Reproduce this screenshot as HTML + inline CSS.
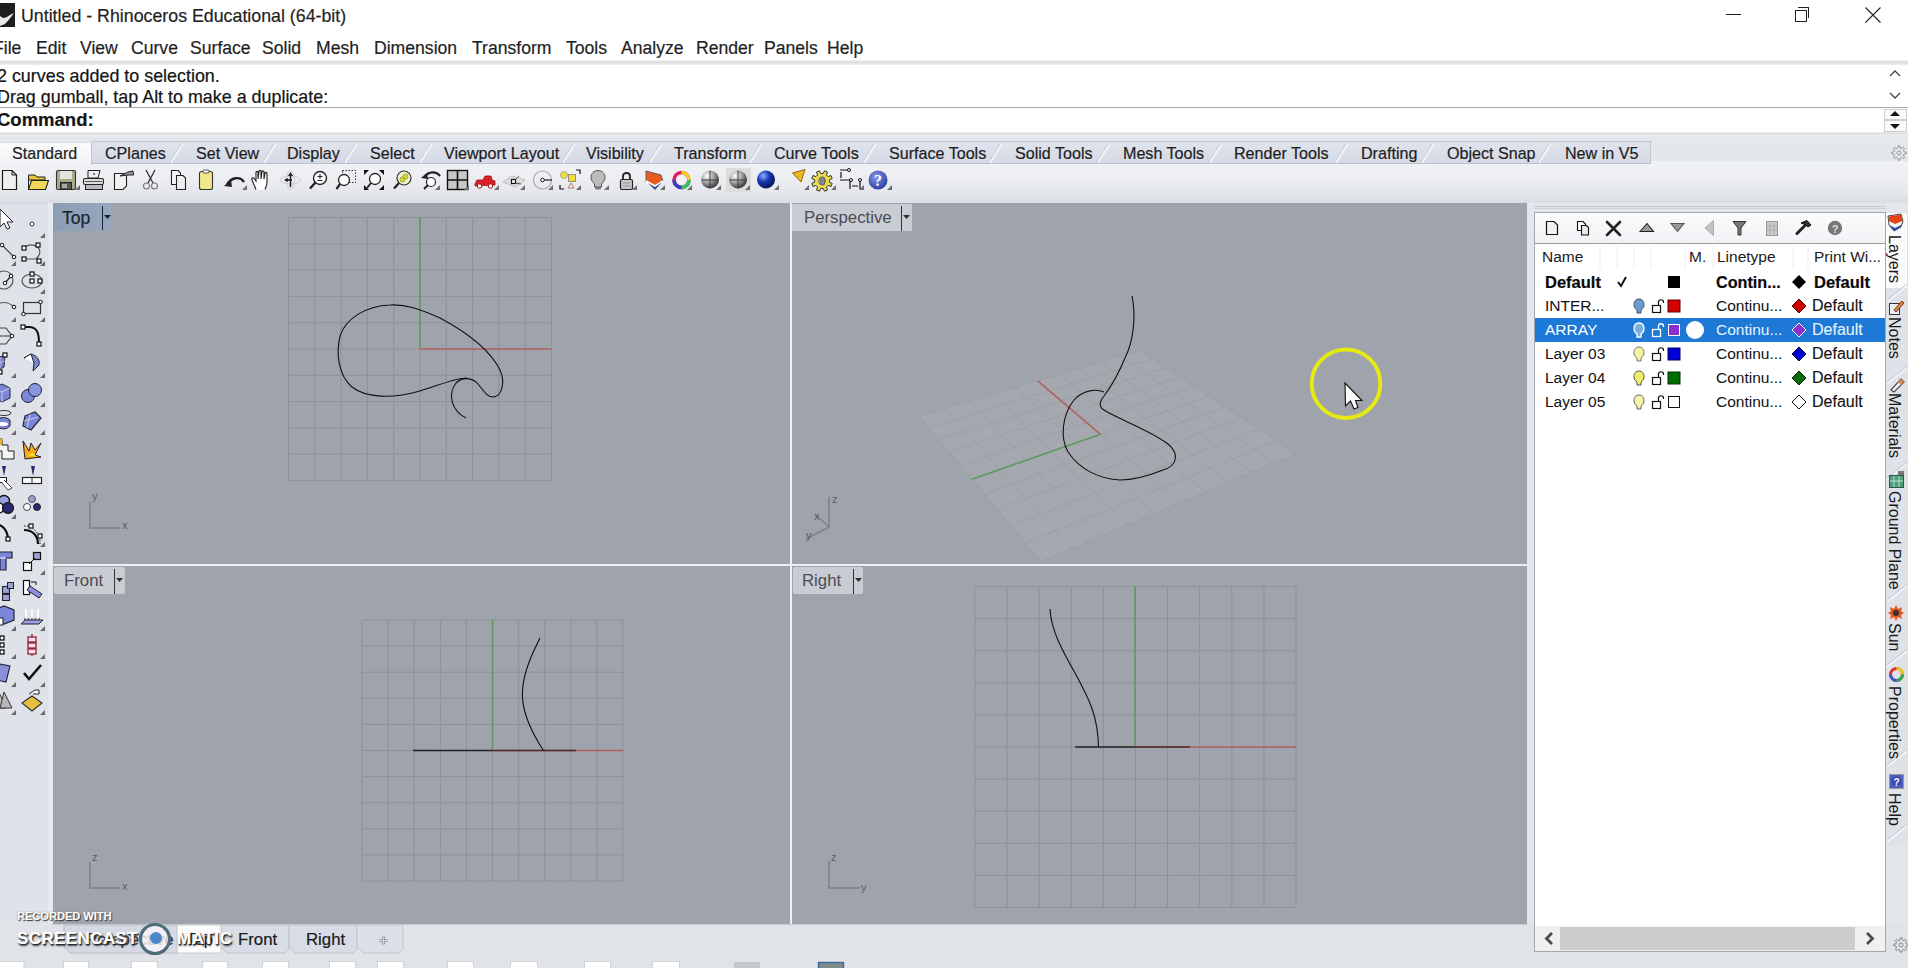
<!DOCTYPE html>
<html><head><meta charset="utf-8">
<style>
*{margin:0;padding:0;box-sizing:border-box}
html,body{width:1908px;height:968px;overflow:hidden;background:#e2e5ea;font-family:"Liberation Sans",sans-serif;color:#111}
.a{position:absolute;white-space:nowrap}
.a,.tab,.m{-webkit-text-stroke:0.2px currentColor}
.m{position:absolute;top:0}
.tab{position:absolute;top:142px;height:23px;font-size:16.1px;line-height:23px;color:#1e1e1e}
.vp{position:absolute;background:#9fa3ab;overflow:hidden}
.vl{position:absolute;left:0;top:0;height:28px;font-size:17.5px;line-height:28px;color:#3a3d42;padding-left:10px}
.vl i{position:absolute;top:3px;width:1px;height:22px;background:#555}
.vl b{position:absolute;top:12px;width:0;height:0;border-left:4px solid transparent;border-right:4px solid transparent;border-top:4px solid #222}
.ax{position:absolute;font-size:11px;color:#555}

</style></head><body>
<!-- title bar -->
<div class="a" style="left:0;top:0;width:1908px;height:61px;background:#fff"></div>

<svg class="a" style="left:0;top:3px" width="15" height="24"><rect x="0" y="0" width="15" height="24" fill="#1e1e1e"/><path d="M14,10 C11,14 8,18 5,21 L0,23 L0,13 L3,15 C6,15 8,13 10,12Z" fill="#e8e8e8"/></svg>
<div class="a" style="left:21px;top:4px;font-size:17.8px;line-height:24px;color:#1f1f1f">Untitled - Rhinoceros Educational (64-bit)</div>
<div class="a" style="left:1726px;top:14px;width:15px;height:1px;background:#222"></div>
<div class="a" style="left:1795px;top:10px;width:12px;height:12px;border:1px solid #222;background:#fff"></div>
<div class="a" style="left:1798px;top:7px;width:11px;height:11px;border-top:1px solid #222;border-right:1px solid #222"></div>
<div class="a" style="left:1795px;top:10px;width:12px;height:12px;border:1px solid #222"></div>
<svg class="a" style="left:1864px;top:6px" width="18" height="18"><path d="M1.5,1.5 L16.5,16.5 M16.5,1.5 L1.5,16.5" stroke="#222" stroke-width="1.1"/></svg>
<!-- menu -->
<div class="a" style="left:0;top:36px;width:900px;height:24px;font-size:17.6px;line-height:24px;color:#1f1f1f">
<span class="m" style="left:-7px">File</span><span class="m" style="left:36px">Edit</span><span class="m" style="left:80px">View</span><span class="m" style="left:131px">Curve</span><span class="m" style="left:190px">Surface</span><span class="m" style="left:262px">Solid</span><span class="m" style="left:316px">Mesh</span><span class="m" style="left:374px">Dimension</span><span class="m" style="left:472px">Transform</span><span class="m" style="left:566px">Tools</span><span class="m" style="left:621px">Analyze</span><span class="m" style="left:696px">Render</span><span class="m" style="left:764px">Panels</span><span class="m" style="left:827px">Help</span>
</div>
<div class="a" style="left:0;top:60px;width:1908px;height:5px;background:linear-gradient(#f3f3f3,#dcdcdc 50%,#f0f0f0)"></div>
<!-- command area -->
<div class="a" style="left:0;top:65px;width:1908px;height:67px;background:#fff"></div>
<div class="a" style="left:0;top:107px;width:1908px;height:1px;background:#a9a9a9"></div>
<div class="a" style="left:-3px;top:66px;font-size:17.9px;line-height:21px;color:#141414">2 curves added to selection.</div>
<div class="a" style="left:-3px;top:87px;font-size:17.9px;line-height:21px;color:#141414">Drag gumball, tap Alt to make a duplicate:</div>
<div class="a" style="left:-3px;top:109px;font-size:18.5px;line-height:21px;color:#141414;font-weight:bold">Command:</div>
<svg class="a" style="left:1884px;top:66px" width="24" height="68">
<path d="M6,10 L11,5 L16,10" fill="none" stroke="#444" stroke-width="1.3"/>
<path d="M6,27 L11,32 L16,27" fill="none" stroke="#444" stroke-width="1.3"/>
<rect x="0.5" y="43.5" width="22" height="10" fill="#fafafa" stroke="#cfcfcf"/>
<rect x="0.5" y="54.5" width="22" height="11" fill="#fafafa" stroke="#cfcfcf"/>
<path d="M6,50 L11,45 L16,50Z" fill="#111"/><path d="M6,58 L11,63 L16,58Z" fill="#111"/>
</svg>
<!-- toolbar band -->
<div class="a" style="left:0;top:132px;width:1908px;height:71px;background:linear-gradient(#e6e8ec 0px,#e6e8ec 1px,#d6d9de 2px,#eceef1 3px,#e4e7ec 6px,#e4e7ec 29px,#f0f2f5 30px,#eceef2 45px,#e2e5ea 64px,#dcdfe5 68px)"></div>
<!-- tabs -->
<div class="a" style="left:92px;top:141px;width:1559px;height:23px;background:linear-gradient(#dfe3ec,#d5dae6);border-top:1px solid #bfc4cd;border-bottom:1px solid #b9bec8;border-right:1px solid #c4c8d0"></div>
<div class="a" style="left:0;top:142px;width:92px;height:23px;background:linear-gradient(#fbfbfc,#f1f2f5);border-right:1px solid #c0c4cc;border-top:1px solid #d8dbe0"></div>
<svg class="a" style="left:0;top:141px" width="1660" height="24">
<g stroke="#f4f6f9" stroke-width="1.6" fill="none">
<path d="M171,22 L183,3"/><path d="M264,22 L276,3"/><path d="M345,22 L357,3"/><path d="M420,22 L432,3"/><path d="M563,22 L575,3"/><path d="M650,22 L662,3"/><path d="M750,22 L762,3"/><path d="M864,22 L876,3"/><path d="M990,22 L1002,3"/><path d="M1098,22 L1110,3"/><path d="M1210,22 L1222,3"/><path d="M1336,22 L1348,3"/><path d="M1422,22 L1434,3"/><path d="M1539,22 L1551,3"/>
</g>
<g stroke="#ccd0d9" stroke-width="1" fill="none">
<path d="M169,22 L181,3"/><path d="M262,22 L274,3"/><path d="M343,22 L355,3"/><path d="M418,22 L430,3"/><path d="M561,22 L573,3"/><path d="M648,22 L660,3"/><path d="M748,22 L760,3"/><path d="M862,22 L874,3"/><path d="M988,22 L1000,3"/><path d="M1096,22 L1108,3"/><path d="M1208,22 L1220,3"/><path d="M1334,22 L1346,3"/><path d="M1420,22 L1432,3"/><path d="M1537,22 L1549,3"/>
</g>
</svg>
<div class="tab" style="left:12px">Standard</div>
<div class="tab" style="left:105px">CPlanes</div>
<div class="tab" style="left:196px">Set View</div>
<div class="tab" style="left:287px">Display</div>
<div class="tab" style="left:370px">Select</div>
<div class="tab" style="left:444px">Viewport Layout</div>
<div class="tab" style="left:586px">Visibility</div>
<div class="tab" style="left:674px">Transform</div>
<div class="tab" style="left:774px">Curve Tools</div>
<div class="tab" style="left:889px">Surface Tools</div>
<div class="tab" style="left:1015px">Solid Tools</div>
<div class="tab" style="left:1123px">Mesh Tools</div>
<div class="tab" style="left:1234px">Render Tools</div>
<div class="tab" style="left:1361px">Drafting</div>
<div class="tab" style="left:1447px">Object Snap</div>
<div class="tab" style="left:1565px">New in V5</div>
<svg class="a" style="left:1891px;top:145px" width="16" height="16"><path d="M13.1,6.9 L15.1,7.0 L15.1,9.0 L13.1,9.1 L12.4,10.8 L13.7,12.3 L12.3,13.7 L10.8,12.4 L9.1,13.1 L9.0,15.1 L7.0,15.1 L6.9,13.1 L5.2,12.4 L3.7,13.7 L2.3,12.3 L3.6,10.8 L2.9,9.1 L0.9,9.0 L0.9,7.0 L2.9,6.9 L3.6,5.2 L2.3,3.7 L3.7,2.3 L5.2,3.6 L6.9,2.9 L7.0,0.9 L9.0,0.9 L9.1,2.9 L10.8,3.6 L12.3,2.3 L13.7,3.7 L12.4,5.2Z" fill="none" stroke="#9a9a9a" stroke-width="1"/><circle cx="8" cy="8" r="2" fill="none" stroke="#9a9a9a" stroke-width="1"/></svg>
<!-- left toolbar -->
<div class="a" style="left:0;top:203px;width:48px;height:721px;background:#dfe2e8;border-top:1px solid #d2d5db"></div>
<div class="a" style="left:48px;top:203px;width:5px;height:721px;background:#e7eaef"></div>
<!-- viewports -->
<div class="vp" style="left:53px;top:203px;width:737px;height:361px"></div>
<div class="vp" style="left:792px;top:203px;width:735px;height:361px"></div>
<div class="vp" style="left:53px;top:566px;width:737px;height:358px"></div>
<div class="vp" style="left:792px;top:566px;width:735px;height:358px"></div>
<div class="a" style="left:790px;top:203px;width:2px;height:721px;background:#eceef2"></div>
<div class="a" style="left:53px;top:564px;width:1474px;height:2px;background:#eceef2"></div>
<!-- right panel outer -->
<div class="a" style="left:1527px;top:203px;width:381px;height:721px;background:#e3e6eb"></div>
<!-- bottom area -->
<div class="a" style="left:0;top:924px;width:1533px;height:44px;background:#e0e3e8"></div>
<div class="a" style="left:1527px;top:924px;width:381px;height:44px;background:#e0e3e8"></div>

<svg class="a" style="left:0;top:0" width="1908" height="968" viewBox="0 0 1908 968">
<defs>
<clipPath id="cTop"><rect x="53" y="203" width="737" height="361"/></clipPath>
<clipPath id="cPer"><rect x="792" y="203" width="735" height="361"/></clipPath>
<clipPath id="cFr"><rect x="53" y="566" width="737" height="358"/></clipPath>
<clipPath id="cRt"><rect x="792" y="566" width="735" height="358"/></clipPath>
</defs>
<g clip-path="url(#cTop)"><g stroke="#8d9199" stroke-width="1"><line x1="288.5" y1="217.5" x2="288.5" y2="480.5"/><line x1="288.5" y1="217.5" x2="551.5" y2="217.5"/><line x1="314.8" y1="217.5" x2="314.8" y2="480.5"/><line x1="288.5" y1="243.8" x2="551.5" y2="243.8"/><line x1="341.1" y1="217.5" x2="341.1" y2="480.5"/><line x1="288.5" y1="270.1" x2="551.5" y2="270.1"/><line x1="367.4" y1="217.5" x2="367.4" y2="480.5"/><line x1="288.5" y1="296.4" x2="551.5" y2="296.4"/><line x1="393.7" y1="217.5" x2="393.7" y2="480.5"/><line x1="288.5" y1="322.7" x2="551.5" y2="322.7"/><line x1="420.0" y1="217.5" x2="420.0" y2="480.5"/><line x1="288.5" y1="349.0" x2="551.5" y2="349.0"/><line x1="446.3" y1="217.5" x2="446.3" y2="480.5"/><line x1="288.5" y1="375.3" x2="551.5" y2="375.3"/><line x1="472.6" y1="217.5" x2="472.6" y2="480.5"/><line x1="288.5" y1="401.6" x2="551.5" y2="401.6"/><line x1="498.9" y1="217.5" x2="498.9" y2="480.5"/><line x1="288.5" y1="427.9" x2="551.5" y2="427.9"/><line x1="525.2" y1="217.5" x2="525.2" y2="480.5"/><line x1="288.5" y1="454.2" x2="551.5" y2="454.2"/><line x1="551.5" y1="217.5" x2="551.5" y2="480.5"/><line x1="288.5" y1="480.5" x2="551.5" y2="480.5"/></g><line x1="420" y1="217.5" x2="420" y2="349" stroke="#5f9a5f" stroke-width="1.6"/><line x1="420" y1="349" x2="551.5" y2="349" stroke="#b0615f" stroke-width="1.6"/><path d="M466,418 C452,411 447,395 456,383 C462,377 472,377 478,384 C484,391 487,397 493,397 C503,396 505,381 500,370 C491,352 470,334 440,318 C420,309 405,304 390,305 C366,306 346,318 340,336 C336,353 338,375 352,387 C366,398 392,399 420,391 C440,385 455,378 467,378" fill="none" stroke="#111" stroke-width="1.1"/></g>
<g clip-path="url(#cPer)"><polygon points="919.5,416.3 1139.7,350.4 1295.4,453.8 1040.8,561.6" fill="#a5a8af"/><g stroke="#9b9fa6" stroke-width="1"><line x1="1295.4" y1="453.8" x2="1040.8" y2="561.6"/><line x1="1295.4" y1="453.8" x2="1139.7" y2="350.4"/><line x1="1276.4" y1="441.2" x2="1025.4" y2="543.2"/><line x1="1274.0" y1="462.9" x2="1120.5" y2="356.2"/><line x1="1258.3" y1="429.1" x2="1011.0" y2="525.9"/><line x1="1251.8" y1="472.3" x2="1100.7" y2="362.1"/><line x1="1241.0" y1="417.7" x2="997.3" y2="509.5"/><line x1="1228.8" y1="482.0" x2="1080.3" y2="368.2"/><line x1="1224.6" y1="406.8" x2="984.4" y2="494.0"/><line x1="1205.0" y1="492.1" x2="1059.4" y2="374.4"/><line x1="1208.8" y1="396.3" x2="972.1" y2="479.3"/><line x1="1180.2" y1="502.6" x2="1037.8" y2="380.9"/><line x1="1193.8" y1="386.3" x2="960.5" y2="465.4"/><line x1="1154.5" y1="513.5" x2="1015.6" y2="387.5"/><line x1="1179.4" y1="376.8" x2="949.5" y2="452.2"/><line x1="1127.8" y1="524.8" x2="992.7" y2="394.4"/><line x1="1165.6" y1="367.6" x2="939.0" y2="439.7"/><line x1="1100.0" y1="536.6" x2="969.0" y2="401.5"/><line x1="1152.4" y1="358.8" x2="929.0" y2="427.7"/><line x1="1071.0" y1="548.8" x2="944.7" y2="408.8"/><line x1="1139.7" y1="350.4" x2="919.5" y2="416.3"/><line x1="1040.8" y1="561.6" x2="919.5" y2="416.3"/></g><line x1="1100.4" y1="434.3" x2="1037.8" y2="380.9" stroke="#b0615f" stroke-width="1.6"/><line x1="1100.4" y1="434.3" x2="972.1" y2="479.3" stroke="#5f9a5f" stroke-width="1.6"/><path d="M1132,296 C1136,315 1134,340 1125,358 C1118,375 1110,388 1104,396 C1099,402 1099,407 1104,410 C1120,420 1150,430 1168,444 C1180,454 1177,466 1163,470 C1148,476 1135,480 1120,480 C1100,479 1080,470 1068,452 C1060,438 1062,415 1074,400 C1082,391 1095,388 1104,392" fill="none" stroke="#111" stroke-width="1.1"/></g>
<g clip-path="url(#cFr)"><g stroke="#8d9199" stroke-width="1"><line x1="362.0" y1="620" x2="362.0" y2="881.0"/><line x1="362" y1="620.0" x2="623.0" y2="620.0"/><line x1="388.1" y1="620" x2="388.1" y2="881.0"/><line x1="362" y1="646.1" x2="623.0" y2="646.1"/><line x1="414.2" y1="620" x2="414.2" y2="881.0"/><line x1="362" y1="672.2" x2="623.0" y2="672.2"/><line x1="440.3" y1="620" x2="440.3" y2="881.0"/><line x1="362" y1="698.3" x2="623.0" y2="698.3"/><line x1="466.4" y1="620" x2="466.4" y2="881.0"/><line x1="362" y1="724.4" x2="623.0" y2="724.4"/><line x1="492.5" y1="620" x2="492.5" y2="881.0"/><line x1="362" y1="750.5" x2="623.0" y2="750.5"/><line x1="518.6" y1="620" x2="518.6" y2="881.0"/><line x1="362" y1="776.6" x2="623.0" y2="776.6"/><line x1="544.7" y1="620" x2="544.7" y2="881.0"/><line x1="362" y1="802.7" x2="623.0" y2="802.7"/><line x1="570.8" y1="620" x2="570.8" y2="881.0"/><line x1="362" y1="828.8" x2="623.0" y2="828.8"/><line x1="596.9" y1="620" x2="596.9" y2="881.0"/><line x1="362" y1="854.9" x2="623.0" y2="854.9"/><line x1="623.0" y1="620" x2="623.0" y2="881.0"/><line x1="362" y1="881.0" x2="623.0" y2="881.0"/></g><line x1="492.5" y1="620" x2="492.5" y2="750.5" stroke="#5f9a5f" stroke-width="1.6"/><line x1="492.5" y1="750.5" x2="623" y2="750.5" stroke="#b0615f" stroke-width="1.6"/><line x1="413" y1="750.5" x2="492.5" y2="750.5" stroke="#222" stroke-width="1.4"/><line x1="492.5" y1="750.5" x2="576" y2="750.5" stroke="#4a2c2c" stroke-width="1.5"/><path d="M540,638 C533,652 524,670 522.5,690 C521,710 530,730 543.5,750.5" fill="none" stroke="#111" stroke-width="1.1"/></g>
<g clip-path="url(#cRt)"><g stroke="#8d9199" stroke-width="1"><line x1="975.0" y1="586.5" x2="975.0" y2="907.5"/><line x1="975" y1="586.5" x2="1296.0" y2="586.5"/><line x1="1007.1" y1="586.5" x2="1007.1" y2="907.5"/><line x1="975" y1="618.6" x2="1296.0" y2="618.6"/><line x1="1039.2" y1="586.5" x2="1039.2" y2="907.5"/><line x1="975" y1="650.7" x2="1296.0" y2="650.7"/><line x1="1071.3" y1="586.5" x2="1071.3" y2="907.5"/><line x1="975" y1="682.8" x2="1296.0" y2="682.8"/><line x1="1103.4" y1="586.5" x2="1103.4" y2="907.5"/><line x1="975" y1="714.9" x2="1296.0" y2="714.9"/><line x1="1135.5" y1="586.5" x2="1135.5" y2="907.5"/><line x1="975" y1="747.0" x2="1296.0" y2="747.0"/><line x1="1167.6" y1="586.5" x2="1167.6" y2="907.5"/><line x1="975" y1="779.1" x2="1296.0" y2="779.1"/><line x1="1199.7" y1="586.5" x2="1199.7" y2="907.5"/><line x1="975" y1="811.2" x2="1296.0" y2="811.2"/><line x1="1231.8" y1="586.5" x2="1231.8" y2="907.5"/><line x1="975" y1="843.3" x2="1296.0" y2="843.3"/><line x1="1263.9" y1="586.5" x2="1263.9" y2="907.5"/><line x1="975" y1="875.4" x2="1296.0" y2="875.4"/><line x1="1296.0" y1="586.5" x2="1296.0" y2="907.5"/><line x1="975" y1="907.5" x2="1296.0" y2="907.5"/></g><line x1="1135" y1="586.5" x2="1135" y2="747" stroke="#5f9a5f" stroke-width="1.6"/><line x1="1135" y1="747" x2="1296" y2="747" stroke="#b0615f" stroke-width="1.6"/><line x1="1075" y1="747" x2="1135" y2="747" stroke="#222" stroke-width="1.4"/><line x1="1135" y1="747" x2="1190" y2="747" stroke="#4a2c2c" stroke-width="1.5"/><path d="M1050,609 C1051,630 1062,650 1075,673 C1088,697 1098,715 1098.5,747" fill="none" stroke="#111" stroke-width="1.1"/></g>
<g transform="translate(2,170)"><path d="M0.5,0.5 L10,0.5 L14.5,5 L14.5,19.5 L0.5,19.5Z" fill="#f0f0f0" stroke="#1a1a1a" stroke-width="1.2"/><path d="M10,0.5 L10,5 L14.5,5" fill="none" stroke="#1a1a1a"/></g>
<g transform="translate(28,171)"><path d="M0.5,4 L7,4 L9,6 L17,6 L17,9 L0.5,9Z" fill="#e8c23a" stroke="#222" stroke-width="1"/><path d="M0.5,18.5 L3.5,9.5 L20.5,9.5 L17.5,18.5Z" fill="#f2d85a" stroke="#222" stroke-width="1.1"/><path d="M0.5,9 L0.5,18.5" stroke="#222"/></g>
<g transform="translate(56,170)"><rect x="0.5" y="0.5" width="19" height="19" rx="1.5" fill="#a8ab88" stroke="#333" stroke-width="1.1"/><rect x="4" y="1" width="12" height="8" fill="#e3e3e3"/><rect x="4.5" y="12.5" width="11" height="7" fill="#555" stroke="#222"/><rect x="6" y="14" width="5" height="4" fill="#aaa"/></g><path d="M75,190 L80,185 L80,190Z" fill="#6e6e6e"/>
<g transform="translate(83,170)"><path d="M5,0.5 L17,0.5 L15,8 L5,8Z" fill="#eee" stroke="#222"/><rect x="0.5" y="8.5" width="20" height="6" rx="1.5" fill="#ddd" stroke="#222" stroke-width="1.1"/><rect x="2.5" y="14.5" width="17" height="5" fill="#bbb" stroke="#222"/><path d="M2,11.5 H19" stroke="#555"/><circle cx="11" cy="4" r="1" fill="#555"/></g>
<g transform="translate(114,170)"><path d="M0.5,3.5 L12.5,3.5 L12.5,16 L9,19.5 L0.5,19.5Z" fill="#f2f2f2" stroke="#222" stroke-width="1.1"/><path d="M6,6 L14,2 L19,1 L19.5,5 L14,5Z" fill="#999" stroke="#222"/></g>
<g transform="translate(143,170)"><path d="M3,0 L10,13 M12,0 L5,13" stroke="#333" stroke-width="1.3"/><circle cx="3.5" cy="16" r="3" fill="none" stroke="#777" stroke-width="1.1"/><circle cx="11.5" cy="16" r="3" fill="none" stroke="#777" stroke-width="1.1"/></g>
<g transform="translate(171,170)"><path d="M0.5,0.5 L7,0.5 L9.5,3 L9.5,14.5 L0.5,14.5Z" fill="#f4f4f4" stroke="#222" stroke-width="1.1"/><path d="M5.5,5.5 L12,5.5 L14.5,8 L14.5,19.5 L5.5,19.5Z" fill="#eee" stroke="#222" stroke-width="1.1"/></g>
<g transform="translate(199,170)"><rect x="0.5" y="1.5" width="13" height="18" rx="2" fill="#f0e888" stroke="#333" stroke-width="1.1"/><rect x="4" y="0" width="6" height="3" rx="1" fill="#f8f8f8" stroke="#333" stroke-width="0.8"/></g>
<g transform="translate(224,172)"><path d="M3,13 C7,5 16,4 20,10" fill="none" stroke="#222" stroke-width="2.4"/><path d="M0,14 L7,8 L8,15Z" fill="#222"/></g><path d="M242,190 L247,185 L247,190Z" fill="#6e6e6e"/>
<g transform="translate(251,170)"><path d="M5,19.5 L1,10 C0,8 2,7 3.5,9 L5,11 L5,2.5 C5,1 7,1 7,2.5 L7,9 L8,1.5 C8,0 10,0 10,1.5 L10,9 L11,2 C11,0.5 13,0.5 13,2 L13,9 L14,3.5 C14,2 16,2 16,3.5 L16,12 C16,15 15,17 14,19.5" fill="#fff" stroke="#222" stroke-width="1.1"/></g>
<g transform="translate(280,170)"><ellipse cx="10.5" cy="10" rx="10" ry="4" fill="none" stroke="#ccc" stroke-width="1"/><ellipse cx="10.5" cy="10" rx="4" ry="9.5" fill="none" stroke="#ccc" stroke-width="1"/><path d="M10.5,3 V17 M5,10 H12" stroke="#222" stroke-width="1.5"/><path d="M10.5,2 L8,6 L13,6Z M4,10 L8,8 L8,12Z" fill="#222"/></g>
<g transform="translate(309,170)"><circle cx="11" cy="8" r="6.5" fill="#fff" stroke="#222" stroke-width="1.4"/><path d="M11,4 V9 M8.5,6.5 H13.5 M8.5,10.5 H13.5" stroke="#222" stroke-width="1.1"/><path d="M6.5,12.5 L1,18.5" stroke="#222" stroke-width="2.4"/></g>
<g transform="translate(336,170)"><rect x="6.5" y="0.5" width="13" height="12" fill="none" stroke="#333" stroke-dasharray="1.5 1.5"/><circle cx="8" cy="10" r="5.5" fill="#fff" stroke="#222" stroke-width="1.3"/><path d="M4,14 L0.5,19" stroke="#222" stroke-width="2.2"/></g>
<g transform="translate(364,170)"><path d="M0,0 H5 L0,5Z M20,0 H15 L20,5Z M0,20 H5 L0,15Z M20,20 H15 L20,15Z" fill="#111"/><circle cx="11" cy="9" r="5.5" fill="#fff" stroke="#222" stroke-width="1.3"/><path d="M7,13 L3,18" stroke="#222" stroke-width="2"/></g>
<g transform="translate(393,170)"><circle cx="11" cy="8" r="7" fill="#f4f4d0" stroke="#333" stroke-width="1.2"/><circle cx="9.5" cy="9.5" r="2.6" fill="#d8d820" stroke="#777" stroke-width="0.6"/><circle cx="12.5" cy="6.5" r="2.6" fill="#d8d820" stroke="#777" stroke-width="0.6"/><path d="M6,13 L1,18.5" stroke="#222" stroke-width="2.2"/></g>
<g transform="translate(421,170)"><path d="M3,7 C8,1 15,1 19,6" fill="none" stroke="#222" stroke-width="2.2"/><path d="M0,8 L6,3 L7,9Z" fill="#222"/><circle cx="10" cy="12" r="4.5" fill="#fff" stroke="#222" stroke-width="1.2"/><path d="M7,15 L3,19" stroke="#222" stroke-width="2"/></g><path d="M435,190 L440,185 L440,190Z" fill="#6e6e6e"/>
<g transform="translate(447,170)"><rect x="0.5" y="0.5" width="20" height="19" fill="#c8c8c8" stroke="#111" stroke-width="1.4"/><path d="M10.5,0 V20 M0,10 H21" stroke="#111" stroke-width="1.6"/></g><path d="M464,190 L469,185 L469,190Z" fill="#6e6e6e"/>
<g transform="translate(475,172)"><path d="M0,12 L2,8 L8,8 L10,4 L16,4 L17,8 L20,9 L20,13 L0,14Z" fill="#d8202a" stroke="#a01010" stroke-width="0.8"/><circle cx="4.5" cy="14" r="2.2" fill="#fff" stroke="#a01010"/><circle cx="15.5" cy="14" r="2.2" fill="#fff" stroke="#a01010"/></g><path d="M494,190 L499,185 L499,190Z" fill="#6e6e6e"/>
<g transform="translate(503,170)"><path d="M0,12 L9,6 L22,10 L13,17Z" fill="#e0e0e0" stroke="#bbb"/><path d="M5,9 L17,13 M11,7 L8,15" stroke="#c8c8c8"/><rect x="8.5" y="9.5" width="4" height="4" fill="#fff" stroke="#111" stroke-width="1.2"/><path d="M12,10 L16,6 M12,13 L18,14" stroke="#333" stroke-width="0.8"/></g><path d="M520,190 L525,185 L525,190Z" fill="#6e6e6e"/>
<g transform="translate(533,170)"><circle cx="9.5" cy="10" r="9" fill="none" stroke="#aaa" stroke-width="1.2"/><circle cx="9.5" cy="10" r="1.8" fill="#fff" stroke="#222"/><path d="M11,10 H19" stroke="#222" stroke-width="1.2"/></g><path d="M548,190 L553,185 L553,190Z" fill="#6e6e6e"/>
<g transform="translate(559,169)"><circle cx="5" cy="6" r="3.5" fill="#f2e03a" stroke="#999" stroke-width="0.8"/><rect x="9.5" y="5.5" width="7" height="7" fill="#f2e03a" stroke="#888" stroke-width="0.9"/><path d="M9,19 L12,14 L15,19Z" fill="none" stroke="#c08060"/><path d="M17,1 H21 V5 M1,16 V20 H5" fill="none" stroke="#111" stroke-width="1.2"/></g><path d="M576,190 L581,185 L581,190Z" fill="#6e6e6e"/>
<g transform="translate(591,170)"><path d="M7,0.5 C11,0.5 14,3.5 14,7.5 C14,11 11.5,12.5 10.5,14 L10.5,17 L3.5,17 L3.5,14 C2.5,12.5 0,11 0,7.5 C0,3.5 3,0.5 7,0.5Z" fill="#bbbbbb" stroke="#555" stroke-width="1"/><rect x="4" y="17" width="6" height="2.5" rx="1" fill="#777"/></g><path d="M604,190 L609,185 L609,190Z" fill="#6e6e6e"/>
<g transform="translate(620,171)"><path d="M3,9 V5 C3,1 10,1 10,5 V9" fill="none" stroke="#222" stroke-width="1.8"/><rect x="0.5" y="8.5" width="12" height="10" rx="1.5" fill="#c8c8c8" stroke="#222" stroke-width="1.2"/><path d="M3,12 H10 M3,15 H10" stroke="#999"/></g><path d="M632,190 L637,185 L637,190Z" fill="#6e6e6e"/>
<g transform="translate(645,170)"><path d="M1,1 L16,5 L18,11 L10,18 L1,12Z" fill="#e85a20" stroke="#555" stroke-width="0.9"/><path d="M1,10 L10,15 L18,10 L18,12 L10,19 L1,13Z" fill="#ffffff"/><path d="M3,13 L10,17 L17,12 L10,20Z" fill="#3050a0"/></g><path d="M660,190 L665,185 L665,190Z" fill="#6e6e6e"/>
<g transform="translate(672,170)"><circle cx="9.5" cy="10" r="7.5" fill="none" stroke="#e02060" stroke-width="3.5"/><path d="M9.5,2.5 A7.5,7.5 0 0 1 17,10" fill="none" stroke="#f0d020" stroke-width="3.5"/><path d="M17,10 A7.5,7.5 0 0 1 9.5,17.5" fill="none" stroke="#30c060" stroke-width="3.5"/><path d="M9.5,17.5 A7.5,7.5 0 0 1 2,10" fill="none" stroke="#3040c0" stroke-width="3.5"/><circle cx="9.5" cy="10" r="4" fill="#f4f0f8"/></g><path d="M687,190 L692,185 L692,190Z" fill="#6e6e6e"/>
<defs><radialGradient id="gs" cx="0.35" cy="0.3" r="0.75"><stop offset="0" stop-color="#ffffff"/><stop offset="0.5" stop-color="#a0a0a0"/><stop offset="1" stop-color="#303030"/></radialGradient><radialGradient id="bs" cx="0.35" cy="0.3" r="0.75"><stop offset="0" stop-color="#8ab0ff"/><stop offset="0.45" stop-color="#1838b0"/><stop offset="1" stop-color="#051050"/></radialGradient><radialGradient id="hs" cx="0.4" cy="0.35" r="0.7"><stop offset="0" stop-color="#8a9ae8"/><stop offset="1" stop-color="#2838a0"/></radialGradient></defs>
<g transform="translate(701,170)"><circle cx="9" cy="9.5" r="9" fill="url(#gs)"/><path d="M9,0.5 V18.5 M0.5,10 H17.5" stroke="#333" stroke-width="0.9" fill="none"/></g><path d="M716,190 L721,185 L721,190Z" fill="#6e6e6e"/>
<g transform="translate(729,170)"><rect x="-3" y="-2" width="25" height="24" fill="#dcdcdc"/><circle cx="9" cy="9.5" r="9" fill="url(#gs)"/><path d="M9,0.5 V18.5 M0.5,10 H17.5" stroke="#333" stroke-width="0.9" fill="none"/></g><path d="M745,190 L750,185 L750,190Z" fill="#6e6e6e"/>
<g transform="translate(757,170)"><circle cx="9" cy="9.5" r="9" fill="url(#bs)"/></g><path d="M774,190 L779,185 L779,190Z" fill="#6e6e6e"/>
<g transform="translate(792,169)"><path d="M0.5,4 L13,0.5 L9,13Z" fill="#e8b820" stroke="#a06010" stroke-width="1"/></g><path d="M804,190 L809,185 L809,190Z" fill="#6e6e6e"/>
<g transform="translate(811,171)"><path d="M18.4,11.2 L21.2,12.5 L20.0,15.5 L17.1,14.4 L15.4,16.1 L16.5,19.0 L13.5,20.2 L12.2,17.4 L9.8,17.4 L8.5,20.2 L5.5,19.0 L6.6,16.1 L4.9,14.4 L2.0,15.5 L0.8,12.5 L3.6,11.2 L3.6,8.8 L0.8,7.5 L2.0,4.5 L4.9,5.6 L6.6,3.9 L5.5,1.0 L8.5,-0.2 L9.8,2.6 L12.2,2.6 L13.5,-0.2 L16.5,1.0 L15.4,3.9 L17.1,5.6 L20.0,4.5 L21.2,7.5 L18.4,8.8Z" fill="#e8dc50" stroke="#333" stroke-width="1"/><circle cx="11" cy="10" r="3.5" fill="#e8e8d0" stroke="#555" stroke-width="0.8"/><rect x="9" y="6" width="4.5" height="8" rx="1.5" fill="#888" stroke="#444" stroke-width="0.6"/></g><path d="M831,190 L836,185 L836,190Z" fill="#6e6e6e"/>
<g transform="translate(840,169)"><path d="M0,1 H8 M0,11 H10 M10,11 V20 M20,11 V20 M1,3 V9 M12,17 H18" stroke="#111" stroke-width="1.2" fill="none"/><circle cx="9" cy="1" r="1.5" fill="#fff" stroke="#111"/><circle cx="11" cy="11" r="1.5" fill="#fff" stroke="#111"/><circle cx="20" cy="11" r="1.5" fill="#fff" stroke="#111"/></g><path d="M859,190 L864,185 L864,190Z" fill="#6e6e6e"/>
<g transform="translate(868,170)"><circle cx="10" cy="10" r="9.5" fill="url(#hs)"/><text x="10" y="16" font-family="Liberation Serif" font-size="16" font-weight="bold" fill="#fff" text-anchor="middle">?</text></g><path d="M887,190 L892,185 L892,190Z" fill="#6e6e6e"/>
<g clip-path="url(#cLtb)"><clipPath id="cLtb"><rect x="0" y="203" width="48" height="721"/></clipPath><g transform="translate(-6,213)"><path d="M6,-4 L6,14 L10,10 L13,16 L16,15 L13,9 L19,9Z" fill="#fff" stroke="#222" stroke-width="1"/></g>
<g transform="translate(21,213)"><circle cx="11" cy="11" r="2" fill="#fff" stroke="#333" stroke-width="1"/></g>
<path d="M40,238 L45,233 L45,238Z" fill="#6a6a6a"/>
<g transform="translate(-6,241)"><path d="M8,4 L20,16" stroke="#444" stroke-width="1.2"/><circle cx="8" cy="4" r="1.8" fill="#fff" stroke="#111" stroke-width="1"/><circle cx="20" cy="16" r="1.8" fill="#fff" stroke="#111" stroke-width="1"/></g>
<path d="M11,266 L16,261 L16,266Z" fill="#6a6a6a"/>
<g transform="translate(21,241)"><path d="M3,6 C16,0 24,10 15,18 L3,18" fill="none" stroke="#555" stroke-width="1.2"/><rect x="1" y="5" width="4" height="4" fill="#fff" stroke="#111" stroke-width="1.2"/><rect x="15" y="2" width="4" height="4" fill="#fff" stroke="#111" stroke-width="1.2"/><rect x="1" y="16" width="4" height="4" fill="#fff" stroke="#111" stroke-width="1.2"/><rect x="16" y="18" width="4" height="4" fill="#fff" stroke="#111" stroke-width="1.2"/></g>
<path d="M40,266 L45,261 L45,266Z" fill="#6a6a6a"/>
<g transform="translate(-6,269)"><circle cx="10" cy="11" r="9" fill="none" stroke="#555" stroke-width="1.2"/><path d="M11,14 L17,7" stroke="#222" stroke-width="1.2"/><circle cx="11" cy="14" r="1.8" fill="#fff" stroke="#111" stroke-width="1"/><circle cx="17" cy="7" r="1.8" fill="#fff" stroke="#111" stroke-width="1"/></g>
<g transform="translate(21,269)"><ellipse cx="11" cy="12" rx="10" ry="7" fill="none" stroke="#555" stroke-width="1.2"/><rect x="9" y="3" width="4" height="4" fill="#fff" stroke="#111" stroke-width="1.2"/><rect x="9" y="10" width="4" height="4" fill="#fff" stroke="#111" stroke-width="1.2"/><rect x="17" y="10" width="4" height="4" fill="#fff" stroke="#111" stroke-width="1.2"/></g>
<path d="M40,294 L45,289 L45,294Z" fill="#6a6a6a"/>
<g transform="translate(-6,297)"><path d="M0,10 C6,4 14,4 20,10" fill="none" stroke="#555" stroke-width="1.2"/><circle cx="20" cy="10" r="1.8" fill="#fff" stroke="#111" stroke-width="1"/></g>
<path d="M11,322 L16,317 L16,322Z" fill="#6a6a6a"/>
<g transform="translate(21,297)"><rect x="2.5" y="5.5" width="17" height="11" fill="none" stroke="#333" stroke-width="1.2"/><circle cx="2.5" cy="17" r="1.8" fill="#fff" stroke="#111" stroke-width="1"/><circle cx="19.5" cy="5" r="1.8" fill="#fff" stroke="#111" stroke-width="1"/></g>
<path d="M40,322 L45,317 L45,322Z" fill="#6a6a6a"/>
<g transform="translate(-6,325)"><path d="M0,3 H12 L18,11 L12,19 H0" fill="none" stroke="#444" stroke-width="1.2"/><path d="M3,11 H18" stroke="#333"/><circle cx="3" cy="11" r="1.8" fill="#fff" stroke="#111" stroke-width="1"/><circle cx="18" cy="11" r="1.8" fill="#fff" stroke="#111" stroke-width="1"/></g>
<g transform="translate(21,325)"><path d="M2,2 H8 C16,2 18,8 18,18" fill="none" stroke="#111" stroke-width="2"/><rect x="0" y="0" width="4" height="4" fill="#fff" stroke="#111" stroke-width="1.2"/><rect x="16" y="17" width="4" height="4" fill="#fff" stroke="#111" stroke-width="1.2"/></g>
<g transform="translate(-6,353)"><path d="M1,6 L11,2 L10,14 L2,18Z" fill="#7a86d8" stroke="#223" stroke-width="1"/><path d="M6,4 L6,16 M1,11 L11,8" stroke="#ccd" stroke-width="0.8"/><rect x="9" y="0" width="4" height="4" fill="#fff" stroke="#111" stroke-width="1.2"/><rect x="4" y="17" width="4" height="4" fill="#fff" stroke="#111" stroke-width="1.2"/></g>
<path d="M11,378 L16,373 L16,378Z" fill="#6a6a6a"/>
<g transform="translate(21,353)"><path d="M3,5 L10,1 C17,3 19,8 18,12 L12,18 L13,10 C12,7 8,5 3,5Z" fill="#7a86d8" stroke="#222" stroke-width="1"/><path d="M3,5 L10,1 L13,10" fill="#fff" stroke="#222"/></g>
<path d="M40,378 L45,373 L45,378Z" fill="#6a6a6a"/>
<g transform="translate(-6,382)"><path d="M0,6 L8,2 L16,6 L16,16 L8,20 L0,16Z" fill="#7a86d8" stroke="#223"/><path d="M0,6 L8,10 L16,6 M8,10 V20" stroke="#dde" stroke-width="0.8" fill="none"/></g>
<path d="M11,407 L16,402 L16,407Z" fill="#6a6a6a"/>
<g transform="translate(21,382)"><circle cx="7" cy="14" r="6.5" fill="#7a86d8" stroke="#223"/><circle cx="14" cy="8" r="6.5" fill="#8a96e0" stroke="#223"/></g>
<path d="M40,407 L45,402 L45,407Z" fill="#6a6a6a"/>
<g transform="translate(-6,410)"><ellipse cx="10" cy="3" rx="7" ry="2.5" fill="none" stroke="#333"/><path d="M2,10 Q10,5 16,10 V16 Q10,22 2,16Z" fill="#7a86d8" stroke="#223"/><ellipse cx="9" cy="14" rx="5" ry="2" fill="#fff"/></g>
<path d="M11,435 L16,430 L16,435Z" fill="#6a6a6a"/>
<g transform="translate(21,410)"><path d="M4,6 L14,2 L20,8 L10,20 L2,16Z" fill="#7a86d8" stroke="#223" stroke-width="1.2"/><path d="M9,4 L6,18 M3,11 L17,7" stroke="#dde" stroke-width="0.8"/></g>
<path d="M40,435 L45,430 L45,435Z" fill="#6a6a6a"/>
<g transform="translate(-6,439)"><path d="M0,0 L8,0 L8,6 L14,6 L14,12 L20,12 L20,20 L8,20 L8,12 L0,12Z" fill="#f4f4f0" stroke="#222" stroke-width="1"/><path d="M0,0 L8,0 L8,6 L0,8Z" fill="#f0b020"/></g>
<g transform="translate(21,439)"><path d="M2,2 L8,12 L10,4 L14,11 L20,4 L14,16 L20,18 L4,20Z" fill="#f8a818" stroke="#222" stroke-width="1"/><path d="M6,16 L12,14 L16,18Z" fill="#f8e040"/></g>
<g transform="translate(-6,466)"><path d="M8,0 L12,0 L10,10Z" fill="#2a2a70"/><rect x="0.5" y="11.5" width="12" height="5" fill="#fff" stroke="#222"/><path d="M10,14 L18,22 L14,24 L8,17" fill="#fff" stroke="#444"/></g>
<g transform="translate(21,466)"><path d="M10,0 L14,0 L12,10Z" fill="#2a2a70"/><rect x="1.5" y="11.5" width="19" height="6" fill="#fff" stroke="#222" stroke-width="1.2"/><path d="M11,11 V18" stroke="#222"/></g>
<g transform="translate(-6,494)"><circle cx="10" cy="7" r="5.5" fill="#9aa0e0" stroke="#111" stroke-width="1.4"/><circle cx="5" cy="14" r="5" fill="#fff" stroke="#111" stroke-width="1.4"/><circle cx="14" cy="14" r="5.5" fill="#2a2a70" stroke="#111" stroke-width="1.2"/></g>
<path d="M11,519 L16,514 L16,519Z" fill="#6a6a6a"/>
<g transform="translate(21,494)"><circle cx="11" cy="5" r="3.5" fill="#9aa0d0" stroke="#555"/><circle cx="6" cy="13" r="3.5" fill="#fff" stroke="#444"/><circle cx="16" cy="13" r="3.5" fill="#2a2a70" stroke="#222"/></g>
<g transform="translate(-6,522)"><path d="M0,2 C8,2 14,8 14,18" fill="none" stroke="#111" stroke-width="2.2"/><rect x="12" y="15" width="4" height="4" fill="#fff" stroke="#111" stroke-width="1.2"/></g>
<g transform="translate(21,522)"><path d="M3,8 C12,8 17,14 17,22" fill="none" stroke="#111" stroke-width="2.2"/><path d="M3,4 H10 L19,14 V22" fill="none" stroke="#111" stroke-width="1" stroke-dasharray="1.5 1.5"/><rect x="8" y="2" width="4" height="4" fill="#fff" stroke="#111" stroke-width="1.2"/><rect x="17" y="12" width="4" height="4" fill="#fff" stroke="#111" stroke-width="1.2"/></g>
<path d="M40,547 L45,542 L45,547Z" fill="#6a6a6a"/>
<g transform="translate(-6,550)"><path d="M0,2 L18,2 L18,8 L12,8 L12,20 L6,20 L6,8 L0,8Z" fill="#7a86d8" stroke="#223" stroke-width="1.2"/><path d="M6,8 L12,8" stroke="#fff"/></g>
<g transform="translate(21,550)"><rect x="2.5" y="12.5" width="8" height="8" fill="#fff" stroke="#111" stroke-width="1.2"/><rect x="12.5" y="2.5" width="7" height="7" fill="#9aa0d0" stroke="#111" stroke-width="1.2"/><path d="M8,14 L14,8" stroke="#111"/></g>
<path d="M40,575 L45,570 L45,575Z" fill="#6a6a6a"/>
<g transform="translate(-6,578)"><rect x="-0.5" y="2.5" width="6" height="6" fill="#fff" stroke="#223"/><rect x="8.5" y="8.5" width="7" height="7" fill="#9aa0d0" stroke="#223" stroke-width="1.1"/><rect x="13.5" y="4.5" width="6" height="6" fill="#9aa0d0" stroke="#223"/><rect x="8.5" y="16.5" width="7" height="6" fill="#9aa0d0" stroke="#223"/></g>
<g transform="translate(21,578)"><rect x="2.5" y="2.5" width="6" height="14" fill="#fff" stroke="#111" stroke-width="1.2"/><path d="M6,12 L18,20 L21,16 L9,8Z" fill="#8a90d8" stroke="#223"/><path d="M10,4 H15 V7" fill="none" stroke="#111"/></g>
<g transform="translate(-6,606)"><path d="M0,4 L10,0 L20,4 L20,14 L10,18 L0,14Z" fill="#7a86d8" stroke="#223" stroke-width="1.2"/><rect x="1" y="12" width="8" height="7" fill="#fff" stroke="#223"/></g>
<path d="M11,631 L16,626 L16,631Z" fill="#6a6a6a"/>
<g transform="translate(21,606)"><path d="M5,3 V14 M11,3 V14 M17,3 V14" stroke="#fff" stroke-width="1.6"/><path d="M0,18 L4,14 L22,14 L18,18Z" fill="#9aa0e0" stroke="#223"/><path d="M3,13 H20" stroke="#222" stroke-dasharray="2 1.5"/></g>
<path d="M40,631 L45,626 L45,631Z" fill="#6a6a6a"/>
<g transform="translate(-6,634)"><g fill="#fff" stroke="#111" stroke-width="1.3"><rect x="-1" y="2" width="4" height="4"/><rect x="6" y="2" width="4" height="4"/><rect x="-1" y="9" width="4" height="4"/><rect x="6" y="9" width="4" height="4"/><rect x="-1" y="16" width="4" height="4"/><rect x="6" y="16" width="4" height="4"/></g><g transform="translate(3,0)"></g></g>
<path d="M11,659 L16,654 L16,659Z" fill="#6a6a6a"/>
<g transform="translate(21,634)"><path d="M11,0 V22" stroke="#8a1020" stroke-width="1.2"/><g fill="#fde" stroke="#8a1020" stroke-width="1.2"><rect x="7" y="3" width="8" height="5"/><rect x="7" y="9" width="8" height="5"/><rect x="7" y="15" width="8" height="5"/></g></g>
<path d="M40,659 L45,654 L45,659Z" fill="#6a6a6a"/>
<g transform="translate(-6,662)"><path d="M6,2 L16,4 L12,20 L2,18Z" fill="#8a90d8" stroke="#223" stroke-width="1.1"/><path d="M6,2 L2,10" stroke="#444"/></g>
<path d="M11,687 L16,682 L16,687Z" fill="#6a6a6a"/>
<g transform="translate(21,662)"><path d="M3,11 L8,17 L20,3" fill="none" stroke="#111" stroke-width="2.6"/></g>
<path d="M40,687 L45,682 L45,687Z" fill="#6a6a6a"/>
<g transform="translate(-6,690)"><path d="M4,0 L12,18 L0,18Z" fill="#c8c8c8" stroke="#333"/><path d="M10,2 L18,18 L6,18Z" fill="#b8b8b8" stroke="#333"/></g>
<path d="M11,715 L16,710 L16,715Z" fill="#6a6a6a"/>
<g transform="translate(21,690)"><path d="M11,6 L21,13 L11,21 L1,13Z" fill="#e8c040" stroke="#333" stroke-width="1.2"/><path d="M8,4 L14,0 L18,0 L18,4 L12,4" fill="#fff" stroke="#222"/></g>
<path d="M40,715 L45,710 L45,715Z" fill="#6a6a6a"/></g>
</svg>
<!-- right panel -->
<div class="a" style="left:1534px;top:206px;width:352px;height:1px;background:#c4c7cd"></div>
<div class="a" style="left:1534px;top:208px;width:352px;height:1px;background:#cfd2d7"></div>
<div class="a" style="left:1534px;top:212px;width:352px;height:740px;background:#fff;border:1px solid #a4a8ae"></div>
<div class="a" style="left:1535px;top:213px;width:350px;height:30px;background:linear-gradient(#fbfbfc,#f1f2f5)"></div>
<div class="a" style="left:1535px;top:243px;width:350px;height:1px;background:#9a9da2"></div>
<svg class="a" style="left:1535px;top:213px" width="350" height="30">
<g transform="translate(11,8)"><path d="M0.5,0.5 L8,0.5 L11.5,4 L11.5,13.5 L0.5,13.5Z" fill="#f2f2f2" stroke="#111" stroke-width="1.2"/></g>
<g transform="translate(42,8)"><path d="M0.5,0.5 L6,0.5 L8.5,3 L8.5,9.5 L0.5,9.5Z" fill="#fff" stroke="#111" stroke-width="1.1"/><path d="M4.5,4.5 L9.5,4.5 L11.5,6.5 L11.5,14 L4.5,14Z" fill="#e8e8e8" stroke="#111" stroke-width="1.1"/></g>
<path d="M72,9 L85,22 M85,9 L72,22" stroke="#222" stroke-width="2.6" stroke-linecap="round"/>
<path d="M105,18.5 L112,10.5 L118.5,18.5Z" fill="#999" stroke="#222" stroke-width="1.1"/>
<path d="M136,10.5 L149,10.5 L142.5,18.5Z" fill="#999" stroke="#555" stroke-width="1.1"/>
<path d="M178.5,7.5 L178.5,22.5 L170,15Z" fill="#c4c4c4" stroke="#aaa" stroke-width="1"/>
<path d="M198,8.5 L211,8.5 L206,15 L206,22 L203,22 L203,15Z" fill="#777" stroke="#333" stroke-width="1"/>
<g transform="translate(231,8)"><rect x="0.5" y="0.5" width="11" height="14" fill="#ccc" stroke="#999"/><path d="M4,2 V13 M8,2 V13 M1,5 H11 M1,9 H11" stroke="#aaa"/></g>
<path d="M262,20.5 L270,12.5" stroke="#222" stroke-width="3" stroke-linecap="round"/><path d="M266,10 L272,7.5 L276,12 L273,14 L270,11.5Z" fill="#333" stroke="#111"/>
<circle cx="300" cy="15" r="7.2" fill="#777"/><text x="300" y="19.5" font-family="Liberation Sans" font-size="11" font-weight="bold" fill="#ddd" text-anchor="middle">?</text>
</svg>
<!-- header -->
<div class="a" style="left:1535px;top:244px;width:350px;height:26px;background:#fff"></div>
<svg class="a" style="left:1535px;top:244px" width="350" height="26"><g stroke="#eeeeee" stroke-width="1"><path d="M65,2V25 M82,2V25 M99,2V25 M116,2V25 M150,2V25 M178,2V25 M258,2V25 M273,2V25"/></g></svg>
<div class="a" style="left:1542px;top:245px;font-size:15.5px;line-height:24px;color:#1a1a1a;-webkit-text-stroke:0">Name</div>
<div class="a" style="left:1689px;top:245px;font-size:15.5px;line-height:24px;color:#1a1a1a;-webkit-text-stroke:0">M.</div>
<div class="a" style="left:1717px;top:245px;font-size:15.5px;line-height:24px;color:#1a1a1a;-webkit-text-stroke:0">Linetype</div>
<div class="a" style="left:1814px;top:245px;font-size:15.5px;line-height:24px;color:#1a1a1a;-webkit-text-stroke:0">Print Wi...</div>
<!-- rows -->
<div class="a" style="left:1535px;top:318px;width:350px;height:24px;background:#1d78d6"></div>
<div class="a" style="left:1545px;top:270px;font-size:16.5px;line-height:24px;color:#0a0a0a;font-weight:bold">Default</div>
<div class="a" style="left:1716px;top:270px;font-size:16.2px;line-height:24px;color:#0a0a0a;font-weight:bold">Contin...</div>
<div class="a" style="left:1814px;top:270px;font-size:16.5px;line-height:24px;color:#0a0a0a;font-weight:bold">Default</div>
<div class="a" style="left:1545px;top:294px;font-size:15.5px;line-height:24px;color:#111;-webkit-text-stroke:0">INTER...</div>
<div class="a" style="left:1545px;top:318px;font-size:15.5px;line-height:24px;color:#fff;-webkit-text-stroke:0">ARRAY</div>
<div class="a" style="left:1545px;top:342px;font-size:15.5px;line-height:24px;color:#111;-webkit-text-stroke:0">Layer 03</div>
<div class="a" style="left:1545px;top:366px;font-size:15.5px;line-height:24px;color:#111;-webkit-text-stroke:0">Layer 04</div>
<div class="a" style="left:1545px;top:390px;font-size:15.5px;line-height:24px;color:#111;-webkit-text-stroke:0">Layer 05</div>
<div class="a" style="left:1716px;top:294px;font-size:15.5px;line-height:24px;color:#111;-webkit-text-stroke:0">Continu...</div>
<div class="a" style="left:1716px;top:318px;font-size:15.5px;line-height:24px;color:#e6f4ff;-webkit-text-stroke:0">Continu...</div>
<div class="a" style="left:1716px;top:342px;font-size:15.5px;line-height:24px;color:#111;-webkit-text-stroke:0">Continu...</div>
<div class="a" style="left:1716px;top:366px;font-size:15.5px;line-height:24px;color:#111;-webkit-text-stroke:0">Continu...</div>
<div class="a" style="left:1716px;top:390px;font-size:15.5px;line-height:24px;color:#111;-webkit-text-stroke:0">Continu...</div>
<div class="a" style="left:1812px;top:294px;font-size:16px;line-height:24px;color:#111;-webkit-text-stroke:0.1px currentColor">Default</div>
<div class="a" style="left:1812px;top:318px;font-size:16px;line-height:24px;color:#e6f4ff;-webkit-text-stroke:0.1px currentColor">Default</div>
<div class="a" style="left:1812px;top:342px;font-size:16px;line-height:24px;color:#111;-webkit-text-stroke:0.1px currentColor">Default</div>
<div class="a" style="left:1812px;top:366px;font-size:16px;line-height:24px;color:#111;-webkit-text-stroke:0.1px currentColor">Default</div>
<div class="a" style="left:1812px;top:390px;font-size:16px;line-height:24px;color:#111;-webkit-text-stroke:0.1px currentColor">Default</div>
<svg class="a" style="left:1535px;top:270px" width="350" height="144">
<path d="M83,12 L86,16 L91,7" fill="none" stroke="#111" stroke-width="2"/>
<rect x="133" y="6" width="12" height="12" fill="#000"/>
<rect x="133" y="30" width="12" height="12" fill="#d40000" stroke="#5a0000"/>
<rect x="133.5" y="54.5" width="11" height="11" fill="#8a2fd0" stroke="#fff"/>
<rect x="133" y="78" width="12" height="12" fill="#0000d8" stroke="#00005a"/>
<rect x="133" y="102" width="12" height="12" fill="#006d00" stroke="#003000"/>
<rect x="133.5" y="126.5" width="11" height="11" fill="#fff" stroke="#111"/>
<circle cx="160" cy="60" r="9" fill="#fff"/>
<g stroke-width="1">
<path d="M264,5 L271,12 L264,19 L257,12Z" fill="#000"/>
<path d="M264,29 L271,36 L264,43 L257,36Z" fill="#c80000" stroke="#600"/>
<path d="M264,53 L271,60 L264,67 L257,60Z" fill="#8a2fd0" stroke="#fff"/>
<path d="M264,77 L271,84 L264,91 L257,84Z" fill="#0000d0" stroke="#003"/>
<path d="M264,101 L271,108 L264,115 L257,108Z" fill="#0a6a0a" stroke="#030"/>
<path d="M264,125 L271,132 L264,139 L257,132Z" fill="#fff" stroke="#111"/>
</g>
<g id="bulbs">
<path d="M104,29 C107,29 109,31 109,35 C109,38 107,39 106,40 L106,43 L102,43 L102,40 C101,39 99,38 99,35 C99,31 101,29 104,29Z" fill="#6a9ad0" stroke="#334466" stroke-width="0.9"/>
<path d="M104,53 C107,53 109,55 109,59 C109,62 107,63 106,64 L106,67 L102,67 L102,64 C101,63 99,62 99,59 C99,55 101,53 104,53Z" fill="#7ab0e0" stroke="#fff" stroke-width="1.3"/>
<path d="M104,77 C107,77 109,79 109,83 C109,86 107,87 106,88 L106,91 L102,91 L102,88 C101,87 99,86 99,83 C99,79 101,77 104,77Z" fill="#f2f2a0" stroke="#666" stroke-width="0.9"/>
<path d="M104,101 C107,101 109,103 109,107 C109,110 107,111 106,112 L106,115 L102,115 L102,112 C101,111 99,110 99,107 C99,103 101,101 104,101Z" fill="#eef06a" stroke="#444" stroke-width="0.9"/>
<path d="M104,125 C107,125 109,127 109,131 C109,134 107,135 106,136 L106,139 L102,139 L102,136 C101,135 99,134 99,131 C99,127 101,125 104,125Z" fill="#f4f4a8" stroke="#555" stroke-width="0.9"/>
</g>
<g fill="none" stroke="#111" stroke-width="1.2">
<rect x="117.5" y="35.5" width="8" height="7"/><path d="M123.5,35 V32 C123.5,29 128.5,29 128.5,32 V33"/>
<rect x="117.5" y="83.5" width="8" height="7"/><path d="M123.5,83 V80 C123.5,77 128.5,77 128.5,80 V81"/>
<rect x="117.5" y="107.5" width="8" height="7"/><path d="M123.5,107 V104 C123.5,101 128.5,101 128.5,104 V105"/>
<rect x="117.5" y="131.5" width="8" height="7"/><path d="M123.5,131 V128 C123.5,125 128.5,125 128.5,128 V129"/>
</g>
<g fill="none" stroke="#fff" stroke-width="1.3"><rect x="117.5" y="59.5" width="8" height="7"/><path d="M123.5,59 V56 C123.5,53 128.5,53 128.5,56 V57"/></g>
</svg>

<!-- scrollbar -->
<div class="a" style="left:1535px;top:926px;width:350px;height:25px;background:#f0f0f0"></div>
<div class="a" style="left:1560px;top:927px;width:295px;height:23px;background:#cdcdcd"></div>
<svg class="a" style="left:1535px;top:926px" width="350" height="25"><path d="M17,7 L11.5,12.5 L17,18" fill="none" stroke="#4a4a4a" stroke-width="2.8"/><path d="M332,7 L337.5,12.5 L332,18" fill="none" stroke="#4a4a4a" stroke-width="2.8"/></svg>
<svg class="a" style="left:1893px;top:937px" width="16" height="16"><path d="M13.1,6.9 L15.1,7.0 L15.1,9.0 L13.1,9.1 L12.4,10.8 L13.7,12.3 L12.3,13.7 L10.8,12.4 L9.1,13.1 L9.0,15.1 L7.0,15.1 L6.9,13.1 L5.2,12.4 L3.7,13.7 L2.3,12.3 L3.6,10.8 L2.9,9.1 L0.9,9.0 L0.9,7.0 L2.9,6.9 L3.6,5.2 L2.3,3.7 L3.7,2.3 L5.2,3.6 L6.9,2.9 L7.0,0.9 L9.0,0.9 L9.1,2.9 L10.8,3.6 L12.3,2.3 L13.7,3.7 L12.4,5.2Z" fill="none" stroke="#8a8a8a" stroke-width="1"/><circle cx="8" cy="8" r="2" fill="none" stroke="#8a8a8a" stroke-width="1"/></svg>
<!-- side tabs -->
<div class="a" style="left:1886px;top:212px;width:22px;height:634px;background:#dfe2e9"></div>
<div class="a" style="left:1885px;top:212px;width:1px;height:740px;background:#a4a8ae"></div>
<div class="a" style="left:1886px;top:213px;width:21px;height:75px;background:#fbfbfc"></div>
<svg class="a" style="left:1886px;top:212px" width="22" height="660">
<g stroke="#f7f8fa" stroke-width="1.5" fill="none"><path d="M1,90 L21,74"/><path d="M1,172 L21,156"/><path d="M1,268 L21,252"/><path d="M1,390 L21,374"/><path d="M1,455 L21,439"/><path d="M1,555 L21,539"/><path d="M1,630 L21,614"/></g>
<g stroke="#c5c9d1" stroke-width="1" fill="none"><path d="M1,88 L21,72"/><path d="M1,170 L21,154"/><path d="M1,266 L21,250"/><path d="M1,388 L21,372"/><path d="M1,453 L21,437"/><path d="M1,553 L21,537"/><path d="M1,628 L21,612"/></g>
<path d="M2,4 L15,2 L17,9 L15,15 L8,19 L3,13Z" fill="#f4f4f4" stroke="#333" stroke-width="0.9"/><path d="M2.5,4.5 L15,2.5 L16.5,9 L9,12 L3,9Z" fill="#e8421a"/><path d="M3.5,13 L9,16 L15,13 L15,15 L8,19Z" fill="#2a4aa0"/>
<g transform="translate(3,88)"><rect x="0.5" y="3.5" width="10" height="11" fill="#eee" stroke="#333"/><path d="M5,10 L13,1 L15,3 L7,12Z" fill="#e08a30" stroke="#733"/></g>
<g transform="translate(3,164)"><path d="M2,14 L12,3 L15,6 L5,16Z" fill="#fff" stroke="#444" stroke-width="1.2"/><path d="M9,6 L12,3 L15,6 L12,9Z" fill="#d98a5a"/></g>
<g transform="translate(3,259)"><rect x="0.5" y="4.5" width="14" height="12" fill="#4d9f7a" stroke="#2a5a44"/><path d="M5,5V16 M10,5V16 M1,10H14" stroke="#bfe0d0"/><rect x="9" y="0" width="6" height="4" fill="#777"/></g>
<g transform="translate(3,393)"><path d="M7,0 L9,4 L13,2 L12,6 L15,8 L12,10 L13,14 L9,12 L7,16 L5,12 L1,14 L2,10 L-1,8 L2,6 L1,2 L5,4Z" fill="#e8561a"/><circle cx="7" cy="8" r="3" fill="#333"/></g>
<g transform="translate(3,455)"><circle cx="7.5" cy="7.5" r="6" fill="none" stroke="#e03030" stroke-width="3"/><path d="M7.5,1.5 A6,6 0 0 1 13.5,7.5" fill="none" stroke="#e8d020" stroke-width="3"/><path d="M13.5,7.5 A6,6 0 0 1 7.5,13.5" fill="none" stroke="#20b050" stroke-width="3"/><path d="M7.5,13.5 A6,6 0 0 1 1.5,7.5" fill="none" stroke="#3060d0" stroke-width="3"/></g>
<g transform="translate(3,562)"><rect x="0.5" y="0.5" width="14" height="14" fill="#5060c0" stroke="#999"/><circle cx="7.5" cy="7.5" r="5" fill="#3848b0"/><text x="7.5" y="11.5" font-family="Liberation Sans" font-size="10" font-weight="bold" fill="#fff" text-anchor="middle">?</text></g>
</svg>
<div class="a" style="left:1886px;top:235px;width:16px;transform-origin:0 0;transform:translate(16px,0) rotate(90deg);font-size:16px;line-height:16px;color:#1a1a1a;-webkit-text-stroke:0">Layers</div>
<div class="a" style="left:1886px;top:317px;transform-origin:0 0;transform:translate(16px,0) rotate(90deg);font-size:16px;line-height:16px;color:#1a1a1a;-webkit-text-stroke:0">Notes</div>
<div class="a" style="left:1886px;top:393px;transform-origin:0 0;transform:translate(16px,0) rotate(90deg);font-size:16px;line-height:16px;color:#1a1a1a;-webkit-text-stroke:0">Materials</div>
<div class="a" style="left:1886px;top:491px;transform-origin:0 0;transform:translate(16px,0) rotate(90deg);font-size:16px;line-height:16px;color:#1a1a1a;-webkit-text-stroke:0">Ground Plane</div>
<div class="a" style="left:1886px;top:623px;transform-origin:0 0;transform:translate(16px,0) rotate(90deg);font-size:16px;line-height:16px;color:#1a1a1a;-webkit-text-stroke:0">Sun</div>
<div class="a" style="left:1886px;top:686px;transform-origin:0 0;transform:translate(16px,0) rotate(90deg);font-size:16px;line-height:16px;color:#1a1a1a;-webkit-text-stroke:0">Properties</div>
<div class="a" style="left:1886px;top:793px;transform-origin:0 0;transform:translate(16px,0) rotate(90deg);font-size:16px;line-height:16px;color:#1a1a1a;-webkit-text-stroke:0">Help</div>

<!-- viewport labels -->
<div class="a" style="left:53px;top:203px;width:58px;height:28px;background:linear-gradient(90deg,#8d9db4,#97a7bd)"></div>
<div class="a" style="left:62px;top:205px;font-size:17.6px;line-height:26px;color:#1c2430">Top</div>
<div class="a" style="left:102px;top:206px;width:1px;height:24px;background:#1a2230"></div>
<svg class="a" style="left:103px;top:214px" width="9" height="6"><path d="M1,1 L8,1 L4.5,5Z" fill="#1a2230"/></svg>

<div class="a" style="left:792px;top:204px;width:120px;height:27px;background:#c9ccd3"></div>
<div class="a" style="left:804px;top:205px;font-size:16.8px;line-height:26px;color:#4a4d53;-webkit-text-stroke:0">Perspective</div>
<div class="a" style="left:901px;top:206px;width:1px;height:25px;background:#333"></div>
<svg class="a" style="left:902px;top:214px" width="9" height="6"><path d="M1,1 L8,1 L4.5,5Z" fill="#333"/></svg>

<div class="a" style="left:54px;top:567px;width:71px;height:27px;background:#c9ccd3;border-radius:2px"></div>
<div class="a" style="left:64px;top:568px;font-size:16.8px;line-height:26px;color:#4a4d53;-webkit-text-stroke:0">Front</div>
<div class="a" style="left:114px;top:569px;width:1px;height:25px;background:#333"></div>
<svg class="a" style="left:115px;top:577px" width="9" height="6"><path d="M1,1 L8,1 L4.5,5Z" fill="#333"/></svg>

<div class="a" style="left:793px;top:567px;width:70px;height:27px;background:#c9ccd3;border-radius:2px"></div>
<div class="a" style="left:802px;top:568px;font-size:16.8px;line-height:26px;color:#4a4d53;-webkit-text-stroke:0">Right</div>
<div class="a" style="left:853px;top:569px;width:1px;height:25px;background:#333"></div>
<svg class="a" style="left:854px;top:577px" width="9" height="6"><path d="M1,1 L8,1 L4.5,5Z" fill="#333"/></svg>

<!-- axes icons -->
<svg class="a" style="left:0;top:0" width="1908" height="968">
<g stroke="#7e828a" stroke-width="1.6" fill="none">
<path d="M90,502 L90,528 L120,528"/>
<path d="M90,862 L90,888 L120,888"/>
<path d="M829,861 L829,888 L860,888"/>
<path d="M829,497 L829,527 L816,515 M829,527 L806,539"/>
</g>
<g font-family="Liberation Sans" font-size="11" fill="#5a5e65">
<text x="92" y="500">y</text><text x="122" y="529">x</text>
<text x="92" y="861">z</text><text x="122" y="890">x</text>
<text x="831" y="861">z</text><text x="861" y="891">y</text>
<text x="832" y="503">z</text><text x="814" y="520">x</text><text x="806" y="539">y</text>
</g>
<circle cx="1346" cy="383.7" r="34.3" fill="none" stroke="#e4ea12" stroke-width="4"/>
<path d="M1345,383 L1345.5,406 L1350.5,401 L1354,409 L1358,407.5 L1355.5,400.5 L1362,400.5 Z" fill="#fafafa" stroke="#111" stroke-width="1.1"/>
</svg>
<!-- bottom tabs -->
<div class="a" style="left:52px;top:924px;width:1475px;height:1px;background:#c9ccd2"></div>
<svg class="a" style="left:0;top:924px" width="520" height="32">
<path d="M64,1 L177,1 L177,29 L70,29 L64,23Z" fill="#d5d9e3" stroke="#b8bcc5"/>
<path d="M221,1 L289,1 L289,25 L285,29 L227,29 L221,23Z" fill="#d8dce6" stroke="#bfc3cb"/>
<path d="M289,1 L357,1 L357,25 L353,29 L295,29 L289,23Z" fill="#d8dce6" stroke="#bfc3cb"/>
<path d="M357,1 L403,1 L403,25 L399,29 L363,29 L357,23Z" fill="#dcdfe8" stroke="#c3c7cf"/>
<path d="M177,1 L221,1 L221,29 L177,29Z" fill="#fbfbfc" stroke="#c8ccd2"/>
<path d="M379.5,16.5 H387.5 M383.5,12.5 V20.5" stroke="#777" stroke-width="2.2"/>
<path d="M379.5,16.5 H387.5 M383.5,12.5 V20.5" stroke="#eee" stroke-width="0.8"/>
</svg>
<div class="a" style="left:86px;top:928px;font-size:16.8px;line-height:24px;color:#333">Perspective</div>
<div class="a" style="left:186px;top:928px;font-size:16.8px;line-height:24px;color:#222">Top</div>
<div class="a" style="left:238px;top:928px;font-size:16.8px;line-height:24px;color:#1a1a1a">Front</div>
<div class="a" style="left:306px;top:928px;font-size:16.8px;line-height:24px;color:#1a1a1a">Right</div>
<!-- status bar -->
<svg class="a" style="left:0;top:955px" width="1533" height="13">
<g fill="#fff" stroke="#d0d3d8" stroke-width="1">
<rect x="-1" y="6.5" width="25" height="8"/><rect x="63.5" y="6.5" width="25" height="8"/><rect x="131.5" y="6.5" width="26" height="8"/><rect x="202.5" y="6.5" width="25" height="8"/><rect x="262.5" y="6.5" width="26" height="8"/><rect x="329.5" y="6.5" width="26" height="8"/><rect x="377.5" y="6.5" width="26" height="8"/><rect x="447.5" y="6.5" width="26" height="8"/><rect x="510.5" y="6.5" width="27" height="8"/><rect x="584.5" y="6.5" width="26" height="8"/><rect x="652.5" y="6.5" width="27" height="8"/>
</g>
<rect x="734" y="7" width="26" height="8" fill="#c4c6c9"/>
<rect x="818.5" y="7.5" width="25" height="8" fill="#7e8a8c" stroke="#3a6a9a" stroke-width="1.4"/>
</svg>
<!-- watermark -->
<div class="a" style="left:17px;top:908px;font-size:11.2px;line-height:16px;font-weight:bold;color:#fff;letter-spacing:-0.1px;text-shadow:1px 1px 1px #333,0 0 1px #555">RECORDED WITH</div>
<div class="a" style="left:17px;top:928px;font-size:17px;line-height:22px;font-weight:bold;color:#fff;letter-spacing:0.4px;text-shadow:1px 1px 1px #222,1px 2px 2px #444">SCREENCAST</div>
<svg class="a" style="left:137px;top:921px" width="36" height="36"><circle cx="18" cy="18" r="14.5" fill="rgba(250,244,248,0.8)" stroke="#4f6c7a" stroke-width="3.2"/><circle cx="19" cy="17" r="6" fill="#4a88cc"/></svg>
<div class="a" style="left:177px;top:928px;font-size:17px;line-height:22px;font-weight:bold;color:#fff;letter-spacing:0.6px;text-shadow:1px 1px 1px #222,1px 2px 2px #444">MATIC</div>

</body></html>
